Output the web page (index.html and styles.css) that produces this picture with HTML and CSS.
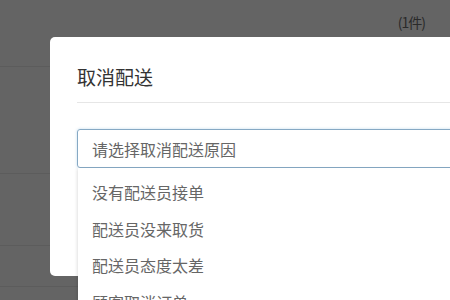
FILE: index.html
```html
<!DOCTYPE html>
<html lang="zh-CN">
<head>
  <meta charset="UTF-8" />
  <meta name="viewport" content="width=device-width, initial-scale=1.0" />
  <title>取消配送</title>
  <link rel="stylesheet" href="styles.css">
</head>
<body>
  <div class="page">
    <div class="top-bar">
      <span class="count">(1件)</span>
    </div>
    <div class="row row-a"></div>
    <div class="row row-b"></div>
    <div class="row row-c"></div>
    <div class="row row-d"></div>

    <div class="modal">
      <h2 class="modal-title">取消配送</h2>
      <div class="modal-body">
        <div class="select">请选择取消配送原因</div>
        <ul class="options">
          <li>没有配送员接单</li>
          <li>配送员没来取货</li>
          <li>配送员态度太差</li>
          <li>顾客取消订单</li>
        </ul>
      </div>
    </div>
  </div>
</body>
</html>
```

FILE: styles.css
```css
html, body {
  margin: 0;
  padding: 0;
}
body {
  font-family: "Noto Sans CJK SC", "Noto Sans", Arial, sans-serif;
  background-color: #646464;
  overflow: hidden;
}
.page {
  position: relative;
  width: 450px;
  height: 300px;
}
.top-bar {
  height: 37px;
  display: flex;
  justify-content: flex-end;
  align-items: center;
  padding-right: 25px;
  box-sizing: border-box;
}
.count {
  color: #2a2a2a;
  font-size: 14px;
  letter-spacing: -1px;
  margin-top: 6px;
}
.row {
  border-bottom: 1px solid #5c5c5c;
}
.row-a { height: 29px; }
.row-b { height: 106px; }
.row-c { height: 71px; }
.row-d { height: 40px; }

.modal {
  position: absolute;
  left: 50px;
  top: 37px;
  width: 430px;
  height: 239px;
  background: #fff;
  border-radius: 5px;
  padding: 0 0 0 27px;
  box-sizing: border-box;
}
.modal-title {
  margin: 0;
  height: 65px;
  line-height: 80px;
  font-size: 19px;
  font-weight: normal;
  color: #333;
  border-bottom: 1px solid #e6e6e6;
}
.modal-body {
  position: relative;
  padding-top: 26px;
}
.select {
  height: 39px;
  line-height: 38px;
  box-sizing: border-box;
  padding-left: 14px;
  font-size: 16px;
  color: #666;
  border: 1px solid #86a9c4;
  border-radius: 3px;
  box-shadow: 0 0 3px rgba(120, 175, 215, 0.45);
}
.options {
  position: absolute;
  left: 1px;
  right: 0;
  top: 65px;
  height: 140px;
  margin: 0;
  padding: 6px 0 0;
  list-style: none;
  background: #fff;
  box-shadow: -1px 1px 3px rgba(0, 0, 0, 0.12);
}
.options li {
  height: 36.5px;
  line-height: 36.5px;
  padding-left: 14px;
  font-size: 16px;
  color: #666;
}
```
